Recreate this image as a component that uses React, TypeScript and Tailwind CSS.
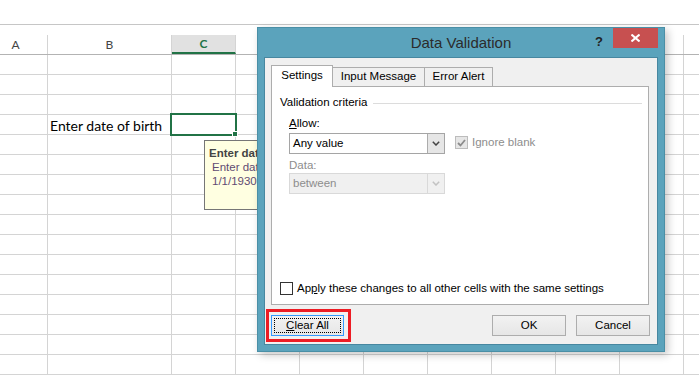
import React from 'react'

const colW = ['w-[64px] -ml-[16px]', 'w-[124px]', 'w-[64px]', 'w-[64px]', 'w-[64px]', 'w-[64px]', 'w-[64px]', 'w-[64px]', 'w-[64px]', 'w-[64px]', 'w-[64px]']
// only A-C are visible, the rest sit under the dialog or off screen
const colNames = ['A', 'B', 'C', '', '', '', '', '', '', '', '']
const rows = Array.from({ length: 16 }, (_, i) => i)

function Chevron({ color }: { color: string }) {
  return (
    <svg width="8" height="5" viewBox="0 0 8 5">
      <polyline points="0.8,0.8 4,4 7.2,0.8" fill="none" stroke={color} strokeWidth="1.5" />
    </svg>
  )
}

function Sheet() {
  return (
    <div className="font-['Lato','Liberation_Sans',sans-serif]">
      <div className="h-[24px]" />
      <div className="h-px bg-[#c6c6c6]" />
      <div className="h-[10px]" />
      {/* column headers */}
      <div className="flex h-[20px] border-b border-[#b3b3b3]">
        {colNames.map((c, i) => (
          <div
            key={i}
            className={`${colW[i]} shrink-0 h-full border-r border-[#d4d4d4] flex items-center justify-center text-[12px] ${
              c === 'C' ? 'bg-[#e1e1e1] border-b-2 border-b-[#217346] text-[#217346] font-bold' : 'text-[#444]'
            }`}
          >
            {c}
          </div>
        ))}
      </div>
      {rows.map(r => (
        <div key={r} className="flex h-[20px] border-b border-[#d4d4d4]">
          {colNames.map((c, i) => (
            <div key={i} className={`${colW[i]} shrink-0 h-full border-r border-[#d4d4d4] flex items-center`}>
              {r === 3 && i === 1 && (
                <span className="pl-[2px] pt-[1px] text-[14px] text-black whitespace-nowrap">Enter date of birth</span>
              )}
            </div>
          ))}
        </div>
      ))}
    </div>
  )
}

function Dialog() {
  return (
    <div className="absolute left-[257px] top-[27px] w-[408px] h-[325px] bg-[#5ba3bc] border border-[#4a8fa6] shadow-[3px_3px_8px_rgba(0,0,0,0.22)] flex flex-col font-['Liberation_Sans',sans-serif]">
      {/* title bar */}
      <div className="h-[29px] relative flex items-center justify-center shrink-0">
        <span className="text-[15px] text-[#2b2b2b] pt-[1px]">Data Validation</span>
        <span className="absolute left-[337px] top-[4px] text-[13px] font-bold text-[#222]">?</span>
        <div className="absolute right-[6px] top-0 w-[45px] h-[20px] bg-[#c75050] flex items-center justify-center">
          <svg width="9" height="8" viewBox="0 0 9 8">
            <line x1="0.5" y1="0.5" x2="8.5" y2="7.5" stroke="white" strokeWidth="2" />
            <line x1="8.5" y1="0.5" x2="0.5" y2="7.5" stroke="white" strokeWidth="2" />
          </svg>
        </div>
      </div>

      {/* client area */}
      <div className="mx-[6px] mb-[6px] flex-1 bg-[#f0f0f0] border border-[#4787a0] flex flex-col px-[6px] pt-[7px] text-[11.5px] text-black">
        {/* tabs */}
        <div className="flex items-end h-[21px] relative z-10">
          <div className="w-[62px] h-[22px] -mb-px bg-white border border-b-0 border-[#adadad] flex items-center justify-center pb-[1px]">
            Settings
          </div>
          <div className="w-[92px] h-[19px] bg-[#f0f0f0] border border-l-0 border-b-0 border-[#adadad] flex items-center justify-center">
            Input Message
          </div>
          <div className="w-[68px] h-[19px] bg-[#f0f0f0] border border-l-0 border-b-0 border-[#adadad] flex items-center justify-center">
            Error Alert
          </div>
        </div>

        {/* panel */}
        <div className="w-[378px] h-[219px] bg-white border border-[#adadad] flex flex-col pl-[8px] pr-[6px] pt-[9px] pb-[7px]">
          <div className="flex items-center h-[14px]">
            <span>Validation criteria</span>
            <div className="flex-1 ml-[6px] h-px bg-[#dcdcdc]" />
          </div>

          <div className="pl-[9px] flex flex-col">
            <div className="mt-[6px] h-[14px] leading-[14px]">
              <span className="underline">A</span>llow:
            </div>
            <div className="mt-[3px] flex items-start">
              <div className="w-[156px] h-[21px] border border-[#a5a5a5] bg-white flex">
                <div className="flex-1 flex items-center pl-[3px]">Any value</div>
                <div className="w-[17px] h-full bg-[#e6e6e6] border-l border-[#acacac] flex items-center justify-center">
                  <Chevron color="#444" />
                </div>
              </div>
              <div className="ml-[10px] mt-[1px] flex items-center">
                <div className="w-[13px] h-[13px] border border-[#bcbcbc] bg-[#e6e6e6] flex items-center justify-center">
                  <svg width="9" height="8" viewBox="0 0 9 8">
                    <polyline points="1,4 3.5,6.5 8,1" fill="none" stroke="#8c8c8c" strokeWidth="1.8" />
                  </svg>
                </div>
                <span className="ml-[4px] text-[#8d8d8d]">Ignore blank</span>
              </div>
            </div>
            <div className="mt-[4px] h-[14px] leading-[14px] text-[#8d8d8d]">Data:</div>
            <div className="mt-[1px] w-[156px] h-[21px] border border-[#d9d9d9] bg-[#f0f0f0] flex">
              <div className="flex-1 flex items-center pl-[3px] text-[#8d8d8d]">between</div>
              <div className="w-[17px] h-full border-l border-[#d9d9d9] flex items-center justify-center">
                <Chevron color="#c2c2c2" />
              </div>
            </div>
          </div>

          <div className="mt-auto flex items-center">
            <div className="w-[13px] h-[13px] border border-[#333] bg-white" />
            <span className="ml-[4px]">
              Ap<span className="underline">p</span>ly these changes to all other cells with the same settings
            </span>
          </div>
        </div>

        {/* buttons */}
        <div className="mt-[10px] w-[379px] flex justify-between">
          <div className="relative">
            <div className="w-[73px] h-[21px] border border-[#3399ff] bg-gradient-to-b from-[#f2f2f2] to-[#e6e6e6] p-[2px]">
              <div className="w-full h-full border border-dotted border-black flex items-center justify-center">
                <span>
                  <span className="underline">C</span>lear All
                </span>
              </div>
            </div>
            <div className="absolute -left-[5px] -top-[6px] -right-[7px] -bottom-[6px] border-[3px] border-[#ed1c24]" />
          </div>
          <div className="flex gap-[10px]">
            <div className="w-[74px] h-[21px] border border-[#adadad] bg-gradient-to-b from-[#f2f2f2] to-[#e6e6e6] flex items-center justify-center">
              OK
            </div>
            <div className="w-[74px] h-[21px] border border-[#adadad] bg-gradient-to-b from-[#f2f2f2] to-[#e6e6e6] flex items-center justify-center">
              Cancel
            </div>
          </div>
        </div>
      </div>
    </div>
  )
}

export default function App() {
  return (
    <div className="relative w-[699px] h-[377px] bg-white overflow-hidden">
      <Sheet />

      {/* active cell C4 */}
      <div className="absolute left-[170px] top-[113px] w-[67px] h-[23px] border-2 border-[#217346]" />
      <div className="absolute left-[232px] top-[131px] w-[6px] h-[6px] bg-[#217346] border border-white" />

      {/* input message tooltip, mostly hidden behind the dialog */}
      <div className="absolute left-[204px] top-[140px] w-[56px] h-[70px] overflow-hidden bg-[#ffffe1] border border-[#767676] pt-[5px] pl-[4px] font-['Liberation_Sans',sans-serif] text-[11.5px] leading-[14px] whitespace-nowrap">
        <div className="font-bold text-[#444]">Enter date of birth</div>
        <div className="pl-[3px] text-[#5f4b73]">Enter date between</div>
        <div className="pl-[3px] text-[#5f4b73]">1/1/1930 and today</div>
      </div>

      <Dialog />
    </div>
  )
}
